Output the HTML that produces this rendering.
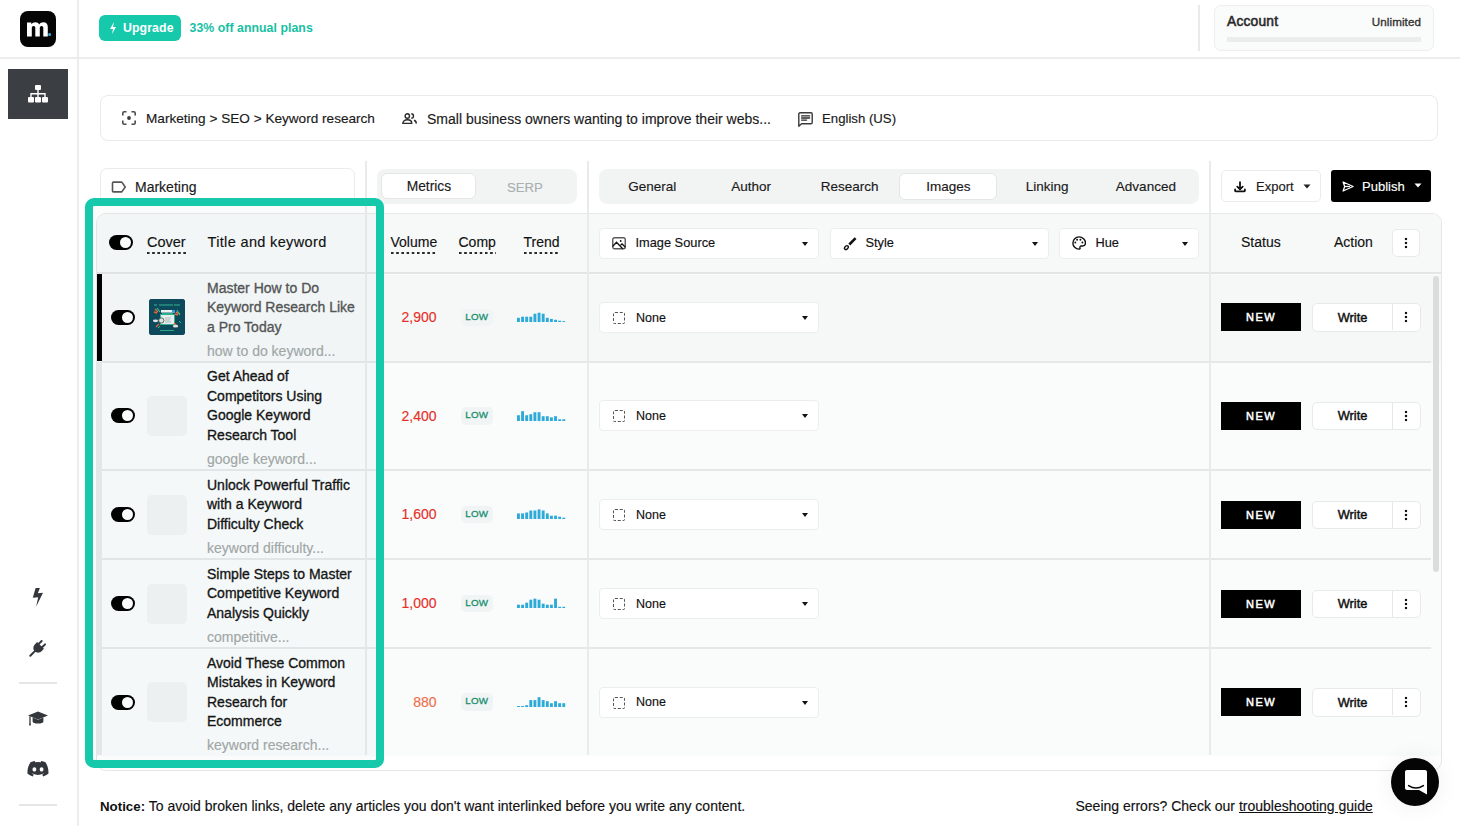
<!DOCTYPE html>
<html><head><meta charset="utf-8">
<style>
*{box-sizing:border-box;margin:0;padding:0}
html,body{width:1460px;height:830px;overflow:hidden;background:#fff}
body{font-family:"Liberation Sans",sans-serif;color:#111;position:relative;font-size:14px}
.a{position:absolute}
.t{position:absolute;white-space:nowrap;line-height:1;-webkit-text-stroke:0.15px currentColor}
svg{display:block}
/* sidebar */
#sbline{left:77.2px;top:0;width:1.6px;height:826px;background:#ececec}
#hline{left:0;top:57px;width:1460px;height:1.5px;background:#ececec}
#logo{left:20px;top:11px;width:36px;height:36px;background:#050505;border-radius:8px}
#nav1{left:8px;top:69px;width:60px;height:50px;background:#3b3e43}
.sep{height:1.5px;background:#e6e6e6}
/* topbar */
#upg{left:99px;top:15px;width:82px;height:26px;background:#17c9ab;border-radius:6px}
#acct{left:1214px;top:5px;width:220px;height:46px;border:1px solid #eeeeee;border-radius:7px;background:#fafbfb}
/* info */
#info{left:100px;top:95px;width:1338px;height:46px;border:1px solid #eaeaea;border-radius:8px;background:#fff}
/* controls */
.seg{background:#f2f4f4;border-radius:8px}
.pill{background:#fff;border:1px solid #e4e6e6;border-radius:6px}
.vsep{width:1.5px;background:#e9ebeb;z-index:1}
.btn{border:1px solid #ebebeb;border-radius:5px;background:#fff}

#card{left:96px;top:213px;width:1346px;height:558px;border:1.5px solid #e6e8e8;border-radius:10px;background:#fff;overflow:hidden}
.hl{left:102px;width:1329px;height:1.8px;background:#e6e8e8}
.tog{width:24px;height:15px;border-radius:8px;background:#000}
.tog:after{content:"";position:absolute;right:2px;top:2px;width:11px;height:11px;border-radius:6px;background:#fff}
.ph{width:40px;height:40px;border-radius:5px;background:#f1f3f3}
#thumb{width:36px;height:36px;border-radius:3px;background:#1d4a5c;overflow:hidden}
.ttl{font-size:14px;line-height:19.5px;white-space:nowrap;-webkit-text-stroke:0.32px currentColor}
.low{width:32.5px;height:17.5px;border-radius:5px;background:#f1f4f4;color:#17906f;font-size:9.8px;font-weight:normal;text-align:center;line-height:16.8px;letter-spacing:0.15px;-webkit-text-stroke:0.3px currentColor}
.dd{height:31px;background:#fff;border:1.5px solid #eceeee;border-radius:4px}
.dash{position:absolute;left:13px;top:9px;width:12px;height:12px;border:1.3px dashed #555;border-radius:2px}
.car{position:absolute;right:10px;top:13px;width:0;height:0;border-left:3.5px solid transparent;border-right:3.5px solid transparent;border-top:4px solid #111}
.new{width:80px;height:28px;background:#000;color:#fff;font-size:11px;font-weight:normal;-webkit-text-stroke:0.5px #fff;letter-spacing:1.4px;text-align:center;line-height:28px}
.wr{width:109px;height:28.5px;background:#fff;border:1.5px solid #e8eaea;border-radius:5px}
.kb{position:absolute;width:4px;height:12px;background:radial-gradient(circle,#111 1.35px,transparent 1.6px) 0 0/4px 4px repeat-y}
.ul{padding-bottom:4px;background:linear-gradient(90deg,#2a2a2a 58%,transparent 58%) 0 100%/5.2px 1.8px repeat-x}
</style></head>
<body>
<!-- SIDEBAR -->
<div class="a" id="sbline"></div>
<div class="a" id="hline"></div>
<div class="a" id="logo">
  <svg class="a" style="left:7px;top:11px" width="24" height="15" viewBox="0 0 24 15"><path d="M0 14.5V0.6h4.3v1.7C5.2 1 6.6 0.2 8.3 0.2c1.9 0 3.2.8 3.9 2.2C13.1 1 14.6 0.2 16.4 0.2c2.8 0 4.4 1.8 4.4 4.8v9.5h-4.5V5.9c0-1.3-.6-2-1.7-2s-1.8.7-1.8 2v8.6H8.3V5.9c0-1.3-.6-2-1.7-2s-1.8.7-1.8 2v8.6z" fill="#fff"/><circle cx="22.6" cy="12.6" r="1.5" fill="#3aa8e0"/></svg>
</div>
<div class="a" id="nav1">
  <svg class="a" style="left:19px;top:16px" width="22" height="18" viewBox="0 0 22 18"><rect x="8" y="0" width="6" height="5" rx="1" fill="#fff"/><rect x="1" y="12" width="6" height="5.5" rx="1" fill="#fff"/><rect x="8" y="12" width="6" height="5.5" rx="1" fill="#fff"/><rect x="15" y="12" width="6" height="5.5" rx="1" fill="#fff"/><path d="M11 5v7M4 12V8.8h14V12" stroke="#fff" stroke-width="1.4" fill="none"/></svg>
</div>
<svg class="a" style="left:30px;top:586px" width="16" height="22" viewBox="30 586 16 22"><path d="M35.6 588h4.3l-2.1 5.2 5.2-.4-6.9 14 2.1-9.5-5.4.5z" fill="#33363b"/></svg>
<svg class="a" style="left:24.5px;top:636.5px" width="24" height="24" viewBox="-12 -12 24 24"><g transform="rotate(45)"><path d="M-2.4-9v4.5M2.4-9v4.5" stroke="#33363b" stroke-width="2" stroke-linecap="round"/><path d="M-4.8-5h9.6v3c0 3.2-2.1 5.2-4.8 5.2s-4.8-2-4.8-5.2z" fill="#33363b"/><path d="M0 3v6.5" stroke="#33363b" stroke-width="2" stroke-linecap="round"/></g></svg>
<div class="a sep" style="left:19px;top:682px;width:38px"></div>
<svg class="a" style="left:27px;top:710px" width="22" height="16" viewBox="0 0 22 16"><path d="M1 5.6L11 1.6l10 4-10 4z" fill="#33363b"/><path d="M5.6 7.4v4.2c0 1.4 2.4 2 5.4 2s5.4-.6 5.4-2V7.4L11 9.8z" fill="#33363b"/><path d="M3 6.2v7.6" stroke="#33363b" stroke-width="1.3"/><path d="M2 13.5h2l-.3 2h-1.4z" fill="#33363b"/></svg>
<svg class="a" style="left:27px;top:760px" width="22" height="17" viewBox="0 0 22 17"><path d="M18.5 2.2A17 17 0 0 0 14.3 1l-.6 1.2a15 15 0 0 0-5.4 0L7.7 1a17 17 0 0 0-4.2 1.2C.9 6.2.2 10 .5 13.8a17 17 0 0 0 5.2 2.6l1.1-1.8a11 11 0 0 1-1.7-.8l.4-.3a12 12 0 0 0 10.9 0l.4.3a11 11 0 0 1-1.7.8l1.1 1.8a17 17 0 0 0 5.2-2.6c.4-4.4-.7-8.2-2.9-11.6zM7.4 11.5c-1 0-1.9-.9-1.9-2.1s.8-2.1 1.9-2.1 1.9.9 1.9 2.1-.8 2.1-1.9 2.1zm7.2 0c-1 0-1.9-.9-1.9-2.1s.8-2.1 1.9-2.1 1.9.9 1.9 2.1-.8 2.1-1.9 2.1z" fill="#33363b"/></svg>
<div class="a sep" style="left:19px;top:804px;width:38px"></div>

<!-- TOPBAR -->
<div class="a" id="upg">
  <svg class="a" style="left:10px;top:7px" width="8" height="12" viewBox="0 0 8 12"><path d="M5 0L1 7h3l-1 5 4-7H4z" fill="#fff"/></svg>
  <div class="t" style="left:24px;top:7.2px;font-size:12.3px;font-weight:bold;color:#fff;-webkit-text-stroke:0;letter-spacing:0.1px">Upgrade</div>
</div>
<div class="t" style="left:189.5px;top:22.2px;font-size:12.3px;font-weight:bold;color:#17c0a3;-webkit-text-stroke:0;letter-spacing:0.05px">33% off annual plans</div>
<div class="a vsep" style="left:1198px;top:5px;height:46px"></div>
<div class="a" id="acct">
  <div class="t" style="left:12px;top:8.8px;font-size:13.8px;font-weight:normal;color:#2a2a2a;-webkit-text-stroke:0.55px #2a2a2a;letter-spacing:0.2px">Account</div>
  <div class="t" style="right:12px;top:9.6px;font-size:11.6px;color:#333;-webkit-text-stroke:0.35px #333;letter-spacing:0.1px">Unlimited</div>
  <div class="a" style="left:12px;top:31px;width:194px;height:5px;background:#ececec"></div>
</div>

<!-- INFO -->
<div class="a" id="info">
  <svg class="a" style="left:21px;top:15px" width="14" height="14" viewBox="0 0 14 14"><path d="M0.8 4.5V2.3c0-.8.7-1.5 1.5-1.5h2.2M9.5.8h2.2c.8 0 1.5.7 1.5 1.5v2.2M13.2 9.5v2.2c0 .8-.7 1.5-1.5 1.5H9.5M4.5 13.2H2.3c-.8 0-1.5-.7-1.5-1.5V9.5" stroke="#4a4a4a" stroke-width="1.6" fill="none"/><circle cx="7" cy="7" r="1.9" fill="#3a3a3a"/></svg>
  <div class="t" style="left:45px;top:16px;font-size:13.6px;color:#1a1a1a">Marketing &gt; SEO &gt; Keyword research</div>
  <svg class="a" style="left:301px;top:16.5px" width="16" height="12" viewBox="0 0 16 12"><circle cx="5.3" cy="3" r="2.2" stroke="#2a2a2a" stroke-width="1.4" fill="none"/><path d="M9.3.8a2.2 2.2 0 0 1 0 4.4" stroke="#2a2a2a" stroke-width="1.4" fill="none"/><path d="M0.8 10.4c0-2.4 2-3.6 4.5-3.6s4.5 1.2 4.5 3.6z" stroke="#2a2a2a" stroke-width="1.4" fill="none" stroke-linejoin="round"/><path d="M12 7.3c1.5.5 2.3 1.6 2.3 3.1" stroke="#2a2a2a" stroke-width="1.5" fill="none"/></svg>
  <div class="t" style="left:326px;top:16px;font-size:14px;color:#1a1a1a">Small business owners wanting to improve their webs...</div>
  <svg class="a" style="left:697px;top:15.5px" width="15" height="15" viewBox="0 0 15 15"><path d="M0.8 14.2V2c0-.7.5-1.2 1.2-1.2h11c.7 0 1.2.5 1.2 1.2v8.6c0 .7-.5 1.2-1.2 1.2H3.6z" stroke="#3a3a3a" stroke-width="1.4" fill="none" stroke-linejoin="round"/><path d="M3.6 3.9h8M3.6 6h8M3.6 8.1h5" stroke="#2a2a2a" stroke-width="1.3" stroke-linecap="round"/></svg>
  <div class="t" style="left:721px;top:16px;font-size:13.2px;color:#1a1a1a">English (US)</div>
</div>

<!-- CONTROLS -->
<div class="a" style="left:100px;top:168px;width:255px;height:36px;border:1px solid #ebebeb;border-radius:7px;background:#fff">
  <svg class="a" style="left:9.5px;top:11.5px" width="15" height="12" viewBox="0 0 15 12"><path d="M1.5 2c0-.5.4-.9.9-.9h8.4l3.4 4.9-3.4 4.9H2.4c-.5 0-.9-.4-.9-.9z" stroke="#555" stroke-width="1.6" fill="none" stroke-linejoin="round"/></svg>
  <div class="t" style="left:34px;top:10.7px;font-size:14px;color:#1a1a1a">Marketing</div>
</div>
<div class="a vsep" style="left:365px;top:161px;height:594px"></div>
<div class="a vsep" style="left:587px;top:161px;height:594px"></div>
<div class="a vsep" style="left:1209px;top:161px;height:594px"></div>
<div class="a seg" style="left:377px;top:169px;width:200px;height:35px"></div>
<div class="a pill" style="left:381px;top:173px;width:95px;height:26px"></div>
<div class="t" style="left:378.9px;width:100px;text-align:center;top:180.2px;font-size:13.8px;color:#1a1a1a">Metrics</div>
<div class="t" style="left:474.9px;width:100px;text-align:center;top:180.6px;font-size:13.2px;color:#a9b0b0">SERP</div>
<div class="a seg" style="left:599px;top:169px;width:600px;height:35px"></div>
<div class="a pill" style="left:899px;top:173px;width:98px;height:27px"></div>
<div class="t" style="left:602.30px;width:100px;text-align:center;top:180.4px;font-size:13.5px;color:#1a1a1a">General</div>
<div class="t" style="left:701.02px;width:100px;text-align:center;top:180.4px;font-size:13.5px;color:#1a1a1a">Author</div>
<div class="t" style="left:799.74px;width:100px;text-align:center;top:180.4px;font-size:13.5px;color:#1a1a1a">Research</div>
<div class="t" style="left:898.46px;width:100px;text-align:center;top:180.4px;font-size:13.5px;color:#1a1a1a">Images</div>
<div class="t" style="left:997.18px;width:100px;text-align:center;top:180.4px;font-size:13.5px;color:#1a1a1a">Linking</div>
<div class="t" style="left:1095.90px;width:100px;text-align:center;top:180.4px;font-size:13.5px;color:#1a1a1a">Advanced</div>
<div class="a btn" style="left:1221px;top:170px;width:100px;height:32px">
  <svg class="a" style="left:11px;top:7.7px" width="14" height="14" viewBox="0 0 14 14"><path d="M7 3.2v7M4.3 7.6L7 10.3l2.7-2.7" stroke="#111" stroke-width="1.8" fill="none" stroke-linecap="round" stroke-linejoin="round"/><path d="M2.1 10.4v1c0 .6.4 1 1 1h7.8c.6 0 1-.4 1-1v-1" stroke="#111" stroke-width="1.8" fill="none" stroke-linecap="round"/></svg>
  <div class="t" style="left:34px;top:9px;font-size:13px;color:#1a1a1a">Export</div>
  <svg class="a" style="left:81px;top:13px" width="8" height="5" viewBox="0 0 8 5"><path d="M0.5 0.5h7L4 4.5z" fill="#222"/></svg>
</div>
<div class="a" style="left:1331px;top:170px;width:100px;height:32px;background:#000;border-radius:3px">
  <svg class="a" style="left:11px;top:10.5px" width="12" height="11" viewBox="0 0 12 11"><path d="M1.1 1l10 4.5-10 4.5 1.6-4.5z" stroke="#fff" stroke-width="1.3" fill="none" stroke-linejoin="round"/><path d="M2.7 5.5H8" stroke="#fff" stroke-width="1.3"/></svg>
  <div class="t" style="left:31px;top:9.6px;font-size:13px;color:#fff">Publish</div>
  <svg class="a" style="left:83px;top:13px" width="8" height="5" viewBox="0 0 8 5"><path d="M0.5 0.5h7L4 4.5z" fill="#fff"/></svg>
</div>

<!-- TABLE -->
<div class="a" id="card">
<div class="a" style="left:0;top:0;width:1346px;height:60px;background:#f7f9f9;border-bottom:2px solid #e3e5e5"></div>
<div class="a" style="left:0;top:60px;width:1346px;height:482px;background:#fafbfb"></div><div class="a" style="left:0;top:61px;width:1346px;height:87.5px;background:#f6f8f8"></div>
</div>
<div id="strip" class="a" style="left:95.5px;top:362px;width:6.5px;height:393px;background:#e8eaea;z-index:0"></div>
<div class="a tog" style="left:109px;top:235px"></div>
<div class="t" style="left:147px;top:235px;font-size:14.5px;color:#111"><span class="ul">Cover</span></div>
<div class="t" style="left:207.5px;top:235px;font-size:14.5px;color:#111;letter-spacing:0.35px">Title and keyword</div>
<div class="t" style="left:390.5px;top:235.2px;font-size:14px;color:#111"><span class="ul">Volume</span></div>
<div class="t" style="left:458.5px;top:235.2px;font-size:14px;color:#111"><span class="ul">Comp</span></div>
<div class="t" style="left:523.5px;top:235.2px;font-size:14px;color:#111"><span class="ul">Trend</span></div>
<div class="a dd" style="left:599px;top:227.5px;width:220px">
  <svg class="a" style="left:12px;top:8.5px" width="14" height="12.5" viewBox="0 0 14 12.5"><rect x="0.75" y="0.75" width="12.5" height="11" rx="1.8" stroke="#5a5a5a" stroke-width="1.4" fill="none"/><path d="M1 9l3.5-3.8 6 6.3M9 7.8l1-.9 3 2.8" stroke="#111" stroke-width="1.3" fill="none" stroke-linecap="round"/><circle cx="8.7" cy="4" r="0.9" fill="#111"/></svg>
  <div class="t" style="left:35.5px;top:8.5px;font-size:12.8px;color:#111">Image Source</div><div class="car"></div></div>
<div class="a dd" style="left:829.5px;top:227.5px;width:219px">
  <svg class="a" style="left:12.5px;top:8.5px" width="14" height="14" viewBox="0 0 14 14"><path d="M12.6 1.2L6.3 7.5" stroke="#111" stroke-width="2.6"/><ellipse cx="3.4" cy="10.6" rx="2.2" ry="1.5" transform="rotate(-45 3.4 10.6)" stroke="#111" stroke-width="1.4" fill="none"/></svg>
  <div class="t" style="left:35px;top:8.5px;font-size:12.8px;color:#111">Style</div><div class="car"></div></div>
<div class="a dd" style="left:1059px;top:227.5px;width:140px">
  <svg class="a" style="left:12.2px;top:7.8px" width="14" height="14" viewBox="0 0 14 14"><path d="M7 .9a6.1 6.1 0 1 0 0 12.2c.8 0 1.3-.6 1-1.3-.3-.9.3-1.8 1.2-1.8h1.4a2.9 2.9 0 0 0 2.9-2.9C13.5 3.5 10.6.9 7 .9z" stroke="#111" stroke-width="1.4" fill="none"/><circle cx="5.1" cy="3.8" r="0.95" fill="#111"/><circle cx="8.4" cy="3.8" r="0.95" fill="#111"/><circle cx="3.3" cy="6.5" r="0.95" fill="#111"/><circle cx="10.4" cy="6.5" r="0.95" fill="#111"/></svg>
  <div class="t" style="left:35.5px;top:8.5px;font-size:12.8px;color:#111">Hue</div><div class="car"></div></div>
<div class="t" style="left:1241px;top:235.2px;font-size:14px;color:#111">Status</div>
<div class="t" style="left:1334px;top:235.2px;font-size:14px;color:#111">Action</div>
<div class="a wr" style="left:1392px;top:229px;width:28px;height:28px"><div class="kb" style="left:11px;top:7px"></div></div>
<div class="a" style="left:1433px;top:276px;width:6px;height:296px;border-radius:3px;background:#dcdcdc"></div>
<div class="a hl" style="top:360.75px"></div>
<div class="a" style="left:97px;top:274px;width:5px;height:87.00px;background:#000"></div>
<div class="a tog" style="left:111px;top:309.75px"></div>
<div class="a" id="thumb" style="left:149px;top:299.25px"><svg width="36" height="36" viewBox="0 0 36 36"><rect width="36" height="36" fill="#0e4a5c"/>
<path d="M5 6h3M10 6h14M25 6h6" stroke="#3fbf9f" stroke-width="0.9"/>
<rect x="11.5" y="15.5" width="14" height="10" fill="#e9efef" stroke="#2bb58f" stroke-width="0.9"/>
<rect x="12" y="11" width="14" height="2.6" fill="#f2f4f4"/><rect x="23" y="11" width="3" height="2.6" fill="#3a9de0"/>
<rect x="13" y="14" width="11" height="1.6" fill="#25b08a"/>
<circle cx="12.3" cy="21.5" r="2.6" fill="#dfe8e8" stroke="#555" stroke-width="0.9"/>
<path d="M16 19h6M16 21h5M16 23h6" stroke="#9aa" stroke-width="0.7"/>
<path d="M6 10l3 3M5 13l3 1" stroke="#f0683a" stroke-width="1.4"/><path d="M8 9l3 4" stroke="#25c49a" stroke-width="1.2"/>
<path d="M27 13l4 2M26 15l3 1" stroke="#f0683a" stroke-width="1.4"/><path d="M28 11l3 5" stroke="#25c49a" stroke-width="1.1"/>
<path d="M7 28l3-3M25 24l4 4" stroke="#f0683a" stroke-width="1.2"/><path d="M9 29l2-2M30 22l2 2" stroke="#25c49a" stroke-width="1"/>
<ellipse cx="6.5" cy="21.8" rx="2.6" ry="1.4" fill="#e3e8e8"/><ellipse cx="26.5" cy="27.2" rx="2.6" ry="1.4" fill="#e3e8e8"/>
<path d="M11 31.5h14" stroke="#2fb88f" stroke-width="0.9"/></svg></div>
<div class="a ttl" style="left:207px;top:278.80px;color:#555">Master How to Do<br>Keyword Research Like<br>a Pro Today</div>
<div class="t" style="left:207px;top:343.65px;font-size:14px;color:#a3a8a8;">how to do keyword...</div>
<div class="t" style="right:1023.5px;top:310.05px;font-size:14px;color:#e5302a">2,900</div>
<div class="a low" style="left:460.5px;top:308.55px">LOW</div>
<svg class="a" style="left:516.8px;top:311px" width="50" height="11" viewBox="0 0 50 11"><rect x="0.00" y="6.80" width="2.9" height="4.20" fill="#2eaad9"/><rect x="4.12" y="5.70" width="2.9" height="5.30" fill="#2eaad9"/><rect x="8.24" y="5.70" width="2.9" height="5.30" fill="#2eaad9"/><rect x="12.36" y="5.70" width="2.9" height="5.30" fill="#2eaad9"/><rect x="16.48" y="2.70" width="2.9" height="8.30" fill="#2eaad9"/><rect x="20.60" y="1.70" width="2.9" height="9.30" fill="#2eaad9"/><rect x="24.72" y="2.70" width="2.9" height="8.30" fill="#2eaad9"/><rect x="28.84" y="6.80" width="2.9" height="4.20" fill="#2eaad9"/><rect x="32.96" y="7.90" width="2.9" height="3.10" fill="#2eaad9"/><rect x="37.08" y="8.80" width="2.9" height="2.20" fill="#2eaad9"/><rect x="41.20" y="9.70" width="2.9" height="1.30" fill="#2eaad9"/><rect x="45.32" y="10.10" width="2.9" height="0.90" fill="#2eaad9"/></svg>
<div class="a dd" style="left:599px;top:301.75px;width:220px"><div class="dash"></div><div class="t" style="left:36px;top:8.92px;font-size:12.5px;color:#111">None</div><div class="car"></div></div>
<div class="a new" style="left:1221px;top:303.25px">NEW</div>
<div class="a wr" style="left:1311.5px;top:303.25px"><div class="t" style="left:0;width:80px;text-align:center;top:7.6px;font-size:12.8px;font-weight:normal;color:#111;-webkit-text-stroke:0.45px #111">Write</div><div class="a" style="left:79px;top:0;width:1px;height:26px;background:#e8e8e8"></div><div class="kb" style="left:91.5px;top:7px"></div></div>
<div class="a hl" style="top:469.25px"></div>
<div class="a tog" style="left:111px;top:408.25px"></div>
<div class="a ph" style="left:147px;top:395.75px"></div>
<div class="a ttl" style="left:207px;top:367.30px;color:#141414">Get Ahead of<br>Competitors Using<br>Google Keyword<br>Research Tool</div>
<div class="t" style="left:207px;top:451.65px;font-size:14px;color:#a3a8a8;">google keyword...</div>
<div class="t" style="right:1023.5px;top:408.55px;font-size:14px;color:#e5302a">2,400</div>
<div class="a low" style="left:460.5px;top:407.05px">LOW</div>
<svg class="a" style="left:516.8px;top:410px" width="50" height="11" viewBox="0 0 50 11"><rect x="0.00" y="5.25" width="2.9" height="5.75" fill="#2eaad9"/><rect x="4.12" y="1.20" width="2.9" height="9.80" fill="#2eaad9"/><rect x="8.24" y="5.25" width="2.9" height="5.75" fill="#2eaad9"/><rect x="12.36" y="4.20" width="2.9" height="6.80" fill="#2eaad9"/><rect x="16.48" y="2.20" width="2.9" height="8.80" fill="#2eaad9"/><rect x="20.60" y="2.20" width="2.9" height="8.80" fill="#2eaad9"/><rect x="24.72" y="6.20" width="2.9" height="4.80" fill="#2eaad9"/><rect x="28.84" y="6.20" width="2.9" height="4.80" fill="#2eaad9"/><rect x="32.96" y="7.35" width="2.9" height="3.65" fill="#2eaad9"/><rect x="37.08" y="6.20" width="2.9" height="4.80" fill="#2eaad9"/><rect x="41.20" y="9.26" width="2.9" height="1.74" fill="#2eaad9"/><rect x="45.32" y="9.26" width="2.9" height="1.74" fill="#2eaad9"/></svg>
<div class="a dd" style="left:599px;top:400.25px;width:220px"><div class="dash"></div><div class="t" style="left:36px;top:8.92px;font-size:12.5px;color:#111">None</div><div class="car"></div></div>
<div class="a new" style="left:1221px;top:401.75px">NEW</div>
<div class="a wr" style="left:1311.5px;top:401.75px"><div class="t" style="left:0;width:80px;text-align:center;top:7.6px;font-size:12.8px;font-weight:normal;color:#111;-webkit-text-stroke:0.45px #111">Write</div><div class="a" style="left:79px;top:0;width:1px;height:26px;background:#e8e8e8"></div><div class="kb" style="left:91.5px;top:7px"></div></div>
<div class="a hl" style="top:558.25px"></div>
<div class="a tog" style="left:111px;top:507.00px"></div>
<div class="a ph" style="left:147px;top:494.50px"></div>
<div class="a ttl" style="left:207px;top:475.80px;color:#141414">Unlock Powerful Traffic<br>with a Keyword<br>Difficulty Check</div>
<div class="t" style="left:207px;top:540.65px;font-size:14px;color:#a3a8a8;">keyword difficulty...</div>
<div class="t" style="right:1023.5px;top:507.30px;font-size:14px;color:#e5302a">1,600</div>
<div class="a low" style="left:460.5px;top:505.80px">LOW</div>
<svg class="a" style="left:516.8px;top:508px" width="50" height="11" viewBox="0 0 50 11"><rect x="0.00" y="5.40" width="2.9" height="5.60" fill="#2eaad9"/><rect x="4.12" y="5.40" width="2.9" height="5.60" fill="#2eaad9"/><rect x="8.24" y="4.50" width="2.9" height="6.50" fill="#2eaad9"/><rect x="12.36" y="2.50" width="2.9" height="8.50" fill="#2eaad9"/><rect x="16.48" y="2.50" width="2.9" height="8.50" fill="#2eaad9"/><rect x="20.60" y="1.40" width="2.9" height="9.60" fill="#2eaad9"/><rect x="24.72" y="2.50" width="2.9" height="8.50" fill="#2eaad9"/><rect x="28.84" y="5.40" width="2.9" height="5.60" fill="#2eaad9"/><rect x="32.96" y="7.70" width="2.9" height="3.30" fill="#2eaad9"/><rect x="37.08" y="7.70" width="2.9" height="3.30" fill="#2eaad9"/><rect x="41.20" y="8.70" width="2.9" height="2.30" fill="#2eaad9"/><rect x="45.32" y="9.70" width="2.9" height="1.30" fill="#2eaad9"/></svg>
<div class="a dd" style="left:599px;top:499.00px;width:220px"><div class="dash"></div><div class="t" style="left:36px;top:8.92px;font-size:12.5px;color:#111">None</div><div class="car"></div></div>
<div class="a new" style="left:1221px;top:500.50px">NEW</div>
<div class="a wr" style="left:1311.5px;top:500.50px"><div class="t" style="left:0;width:80px;text-align:center;top:7.6px;font-size:12.8px;font-weight:normal;color:#111;-webkit-text-stroke:0.45px #111">Write</div><div class="a" style="left:79px;top:0;width:1px;height:26px;background:#e8e8e8"></div><div class="kb" style="left:91.5px;top:7px"></div></div>
<div class="a hl" style="top:647.25px"></div>
<div class="a tog" style="left:111px;top:596.00px"></div>
<div class="a ph" style="left:147px;top:583.50px"></div>
<div class="a ttl" style="left:207px;top:564.80px;color:#141414">Simple Steps to Master<br>Competitive Keyword<br>Analysis Quickly</div>
<div class="t" style="left:207px;top:629.65px;font-size:14px;color:#a3a8a8;">competitive...</div>
<div class="t" style="right:1023.5px;top:596.30px;font-size:14px;color:#e5302a">1,000</div>
<div class="a low" style="left:460.5px;top:594.80px">LOW</div>
<svg class="a" style="left:516.8px;top:597px" width="50" height="11" viewBox="0 0 50 11"><rect x="0.00" y="7.70" width="2.9" height="3.30" fill="#2eaad9"/><rect x="4.12" y="7.70" width="2.9" height="3.30" fill="#2eaad9"/><rect x="8.24" y="5.70" width="2.9" height="5.30" fill="#2eaad9"/><rect x="12.36" y="2.70" width="2.9" height="8.30" fill="#2eaad9"/><rect x="16.48" y="1.65" width="2.9" height="9.35" fill="#2eaad9"/><rect x="20.60" y="2.70" width="2.9" height="8.30" fill="#2eaad9"/><rect x="24.72" y="6.70" width="2.9" height="4.30" fill="#2eaad9"/><rect x="28.84" y="7.70" width="2.9" height="3.30" fill="#2eaad9"/><rect x="32.96" y="7.70" width="2.9" height="3.30" fill="#2eaad9"/><rect x="37.08" y="1.65" width="2.9" height="9.35" fill="#2eaad9"/><rect x="41.20" y="9.80" width="2.9" height="1.20" fill="#2eaad9"/><rect x="45.32" y="9.80" width="2.9" height="1.20" fill="#2eaad9"/></svg>
<div class="a dd" style="left:599px;top:588.00px;width:220px"><div class="dash"></div><div class="t" style="left:36px;top:8.92px;font-size:12.5px;color:#111">None</div><div class="car"></div></div>
<div class="a new" style="left:1221px;top:589.50px">NEW</div>
<div class="a wr" style="left:1311.5px;top:589.50px"><div class="t" style="left:0;width:80px;text-align:center;top:7.6px;font-size:12.8px;font-weight:normal;color:#111;-webkit-text-stroke:0.45px #111">Write</div><div class="a" style="left:79px;top:0;width:1px;height:26px;background:#e8e8e8"></div><div class="kb" style="left:91.5px;top:7px"></div></div>
<div class="a tog" style="left:111px;top:694.50px"></div>
<div class="a ph" style="left:147px;top:682.00px"></div>
<div class="a ttl" style="left:207px;top:653.80px;color:#141414">Avoid These Common<br>Mistakes in Keyword<br>Research for<br>Ecommerce</div>
<div class="t" style="left:207px;top:738.15px;font-size:14px;color:#a3a8a8;">keyword research...</div>
<div class="t" style="right:1023.5px;top:694.80px;font-size:14px;color:#ec6f4c">880</div>
<div class="a low" style="left:460.5px;top:693.30px">LOW</div>
<svg class="a" style="left:516.8px;top:696px" width="50" height="11" viewBox="0 0 50 11"><rect x="0.00" y="10.00" width="2.9" height="1.00" fill="#2eaad9"/><rect x="4.12" y="10.00" width="2.9" height="1.00" fill="#2eaad9"/><rect x="8.24" y="9.20" width="2.9" height="1.80" fill="#2eaad9"/><rect x="12.36" y="4.10" width="2.9" height="6.90" fill="#2eaad9"/><rect x="16.48" y="4.10" width="2.9" height="6.90" fill="#2eaad9"/><rect x="20.60" y="1.20" width="2.9" height="9.80" fill="#2eaad9"/><rect x="24.72" y="4.10" width="2.9" height="6.90" fill="#2eaad9"/><rect x="28.84" y="5.20" width="2.9" height="5.80" fill="#2eaad9"/><rect x="32.96" y="7.20" width="2.9" height="3.80" fill="#2eaad9"/><rect x="37.08" y="5.20" width="2.9" height="5.80" fill="#2eaad9"/><rect x="41.20" y="7.20" width="2.9" height="3.80" fill="#2eaad9"/><rect x="45.32" y="7.20" width="2.9" height="3.80" fill="#2eaad9"/></svg>
<div class="a dd" style="left:599px;top:686.50px;width:220px"><div class="dash"></div><div class="t" style="left:36px;top:8.92px;font-size:12.5px;color:#111">None</div><div class="car"></div></div>
<div class="a new" style="left:1221px;top:688.00px">NEW</div>
<div class="a wr" style="left:1311.5px;top:688.00px"><div class="t" style="left:0;width:80px;text-align:center;top:7.6px;font-size:12.8px;font-weight:normal;color:#111;-webkit-text-stroke:0.45px #111">Write</div><div class="a" style="left:79px;top:0;width:1px;height:26px;background:#e8e8e8"></div><div class="kb" style="left:91.5px;top:7px"></div></div>

<div class="a" style="left:85px;top:198px;width:299px;height:570px;border:8px solid #16c9aa;border-radius:9px;background:rgba(0,110,110,0.02);z-index:2"></div>

<!-- FOOTER -->
<div class="t" style="left:100px;top:798.7px;font-size:14px;color:#111"><b style="font-size:13.3px;-webkit-text-stroke:0">Notice:</b> To avoid broken links, delete any articles you don't want interlinked before you write any content.</div>
<div class="t" style="left:1075.5px;top:798.5px;font-size:14px;color:#111">Seeing errors? Check our <span style="text-decoration:underline">troubleshooting guide</span></div>
<div class="a" style="left:1391px;top:758px;width:48px;height:48px;border-radius:24px;background:#050505;box-shadow:0 0 24px rgba(0,0,0,0.07)">
  <svg class="a" style="left:13.5px;top:11.5px" width="22" height="25" viewBox="0 0 22 25"><path d="M2 0h18c1.1 0 2 .9 2 2v22.5L14 20H2c-1.1 0-2-.9-2-2V2C0 .9.9 0 2 0z" fill="#fff"/><path d="M3.6 15.6Q11 20.6 18.4 15.6" stroke="#050505" stroke-width="1.5" fill="none" stroke-linecap="round"/></svg>
</div>


</body></html>
